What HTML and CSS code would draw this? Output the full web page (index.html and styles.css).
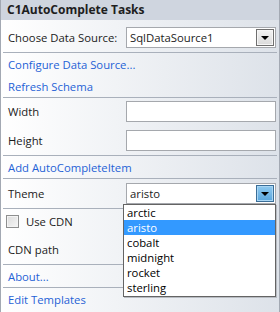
FILE: index.html
```html
<!DOCTYPE html>
<html>
<head>
  <title>C1AutoComplete Tasks</title>
  <link rel="stylesheet" href="styles.css">
</head>
<body>

  <div class="panel">
    <div class="header">C1AutoComplete Tasks</div>

    <div class="body">
      <div class="row row-ds">
        <span class="label">Choose Data Source:</span>
        <div class="combo">
          <span class="combo-text">SqlDataSource1</span>
          <span class="drop-btn"><span class="arrow"></span></span>
        </div>
      </div>
      <div class="sep"></div>

      <div class="row link-row"><a class="link">Configure Data Source...</a></div>
      <div class="row link-row"><a class="link">Refresh Schema</a></div>
      <div class="sep"></div>

      <div class="row row-width">
        <span class="label">Width</span>
        <div class="textbox"></div>
      </div>
      <div class="row row-height">
        <span class="label">Height</span>
        <div class="textbox"></div>
      </div>
      <div class="sep"></div>

      <div class="row link-row"><a class="link">Add AutoCompleteItem</a></div>
      <div class="sep"></div>

      <div class="row row-theme">
        <span class="label">Theme</span>
        <div class="combo">
          <span class="combo-text">aristo</span>
          <span class="drop-btn active"><span class="arrow"></span></span>
          <ul class="droplist">
            <li>arctic</li>
            <li class="selected">aristo</li>
            <li>cobalt</li>
            <li>midnight</li>
            <li>rocket</li>
            <li>sterling</li>
          </ul>
        </div>
      </div>
      <div class="sep"></div>

      <div class="row row-cdn">
        <span class="checkbox"></span>
        <span class="label">Use CDN</span>
      </div>
      <div class="row row-cdnpath">
        <span class="label">CDN path</span>
        <div class="textbox"></div>
      </div>
      <div class="sep"></div>

      <div class="row link-row"><a class="link">About...</a></div>
      <div class="sep"></div>

      <div class="row link-row"><a class="link">Edit Templates</a></div>
    </div>
  </div>

</body>
</html>
```

FILE: styles.css
```css
body {
  margin: 0;
  font-family: "Open Sans", "Noto Sans", sans-serif;
  font-size: 11.3px;
  color: #1b1b1b;
}

.panel {
  width: 280px;
  height: 312px;
  box-sizing: border-box;
  border-left: 1px solid #a3a9b3;
  border-right: 1px solid #a3a9b3;
  background: linear-gradient(to right, #ffffff, #dde2e9);
  overflow: hidden;
}

.header {
  height: 20px;
  line-height: 20px;
  padding-left: 6px;
  font-size: 12px;
  font-weight: bold;
  background: #cfd5df;
  color: #1e1e1e;
}

.body {
  padding: 0 2px;
}

.sep {
  height: 1px;
  background: #a9b0bb;
}

.row {
  display: flex;
  align-items: center;
  padding-left: 5px;
}

.row .textbox,
.row .combo {
  margin-left: auto;
}

.row-ds {
  height: 30px;
  padding-top: 2px;
}

.link-row {
  height: 22px;
}

.link {
  color: #1f62d6;
  cursor: pointer;
}

.row-width {
  height: 27px;
}

.row-height {
  height: 30px;
}

.row-theme {
  height: 28px;
  padding-bottom: 1px;
}

.row-cdn {
  height: 25px;
  padding-left: 3px;
}

.row-cdnpath {
  height: 30px;
}

.textbox,
.combo {
  width: 150px;
  height: 21px;
  box-sizing: border-box;
  margin-right: 1px;
  border: 1px solid #a5a8ad;
  background: #fff;
}

.combo {
  position: relative;
  display: flex;
  align-items: center;
}

.combo-text {
  flex: 1;
  padding-left: 3px;
}

.drop-btn {
  width: 18px;
  height: 17px;
  margin-right: 1px;
  box-sizing: border-box;
  border: 1px solid #6f6f6f;
  box-shadow: inset 0 0 0 1px #f6f6f6;
  background: linear-gradient(#f3f3f3, #dadada);
  display: flex;
  align-items: center;
  justify-content: center;
}

.drop-btn.active {
  border-color: #3a6e98;
  box-shadow: inset 0 0 0 1px #a9d6f4;
  background: linear-gradient(#8fcaf0, #5aa6dd);
}

.arrow {
  width: 0;
  height: 0;
  border-left: 4px solid transparent;
  border-right: 4px solid transparent;
  border-top: 4px solid #000;
  margin-top: 1px;
}

.droplist {
  position: absolute;
  top: 20px;
  left: -4px;
  width: 153px;
  box-sizing: border-box;
  margin: 0;
  padding: 0 0 1px 0;
  list-style: none;
  background: #fff;
  border: 1px solid #646464;
  box-shadow: 1px 1px 0 #b8bcc2;
  z-index: 2;
}

.droplist li {
  height: 15px;
  line-height: 15px;
  padding-left: 3px;
  color: #000;
}

.droplist li.selected {
  background: #3399ff;
  color: #fff;
}

.checkbox {
  width: 13px;
  height: 13px;
  box-sizing: border-box;
  border: 1px solid #8e8f8f;
  background: linear-gradient(135deg, #dcdcdc, #f6f6f6);
  box-shadow: inset 0 0 0 1px #f4f4f4;
  margin-right: 7px;
}
```
